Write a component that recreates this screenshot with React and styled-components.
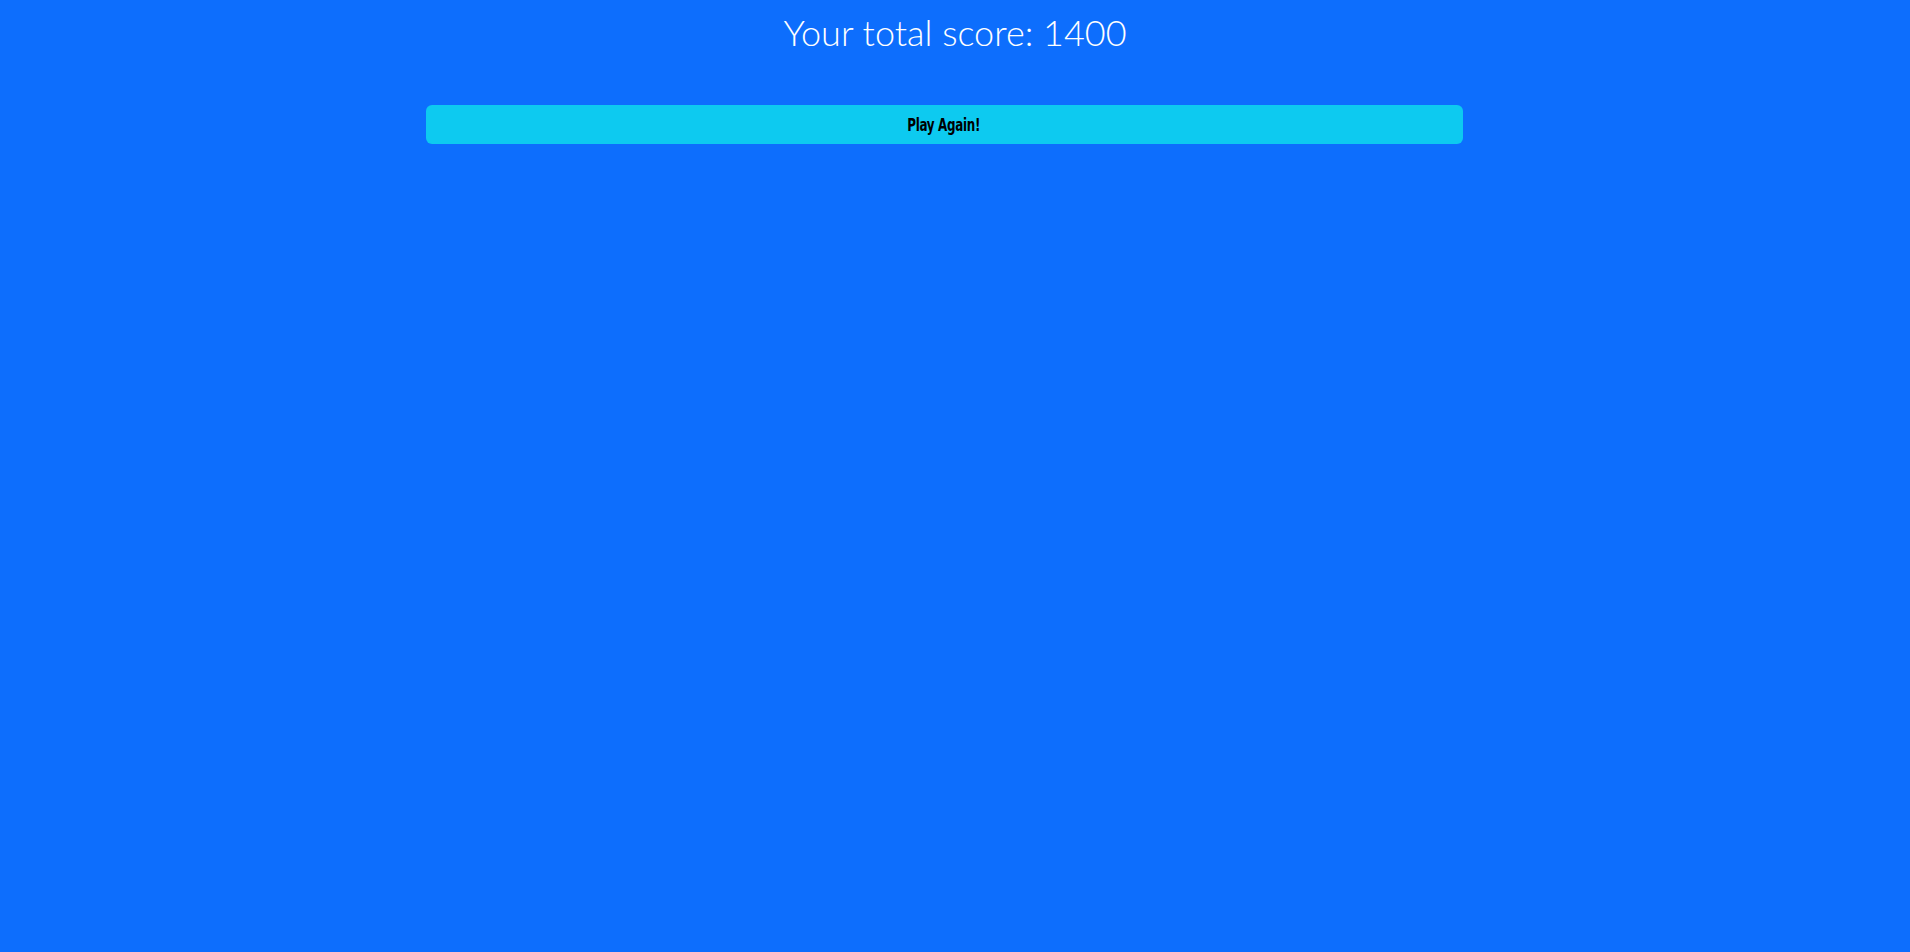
import React from "react";
import styled, { createGlobalStyle } from "styled-components";

const GlobalStyle = createGlobalStyle`
  html, body {
    margin: 0;
    padding: 0;
    background: #0d6efd;
    min-height: 100%;
  }
  body {
    font-family: "Lato", "Liberation Sans", sans-serif;
  }
`;

export default function App() {
  return (
    <>
      <GlobalStyle />
      <Page>
        <Score>Your total score: 1400</Score>
        <ButtonRow>
          <PlayButton type="button">
            <Label>Play Again!</Label>
          </PlayButton>
        </ButtonRow>
      </Page>
    </>
  );
}

const Page = styled.div`
  min-height: 952px;
  background: #0d6efd;
  display: flex;
  flex-direction: column;
  align-items: center;
`;

const Score = styled.h1`
  margin: 8px 0 0 0;
  font-family: "Lato", "Liberation Sans", sans-serif;
  font-weight: 300;
  font-size: 36px;
  line-height: 48px;
  color: #ffffff;
  text-align: center;
`;

const ButtonRow = styled.div`
  width: 1037px;
  margin-top: 49px;
  margin-right: 22px;
`;

const PlayButton = styled.button`
  display: block;
  width: 100%;
  height: 39px;
  border: none;
  border-radius: 6px;
  background: #0dcaf0;
  color: #000;
  cursor: pointer;
`;

const Label = styled.span`
  display: inline-block;
  font-family: "DejaVu Sans Condensed", "DejaVu Sans", sans-serif;
  font-weight: 700;
  font-size: 17px;
  letter-spacing: -0.4px;
  transform: scaleX(0.78);
`;
